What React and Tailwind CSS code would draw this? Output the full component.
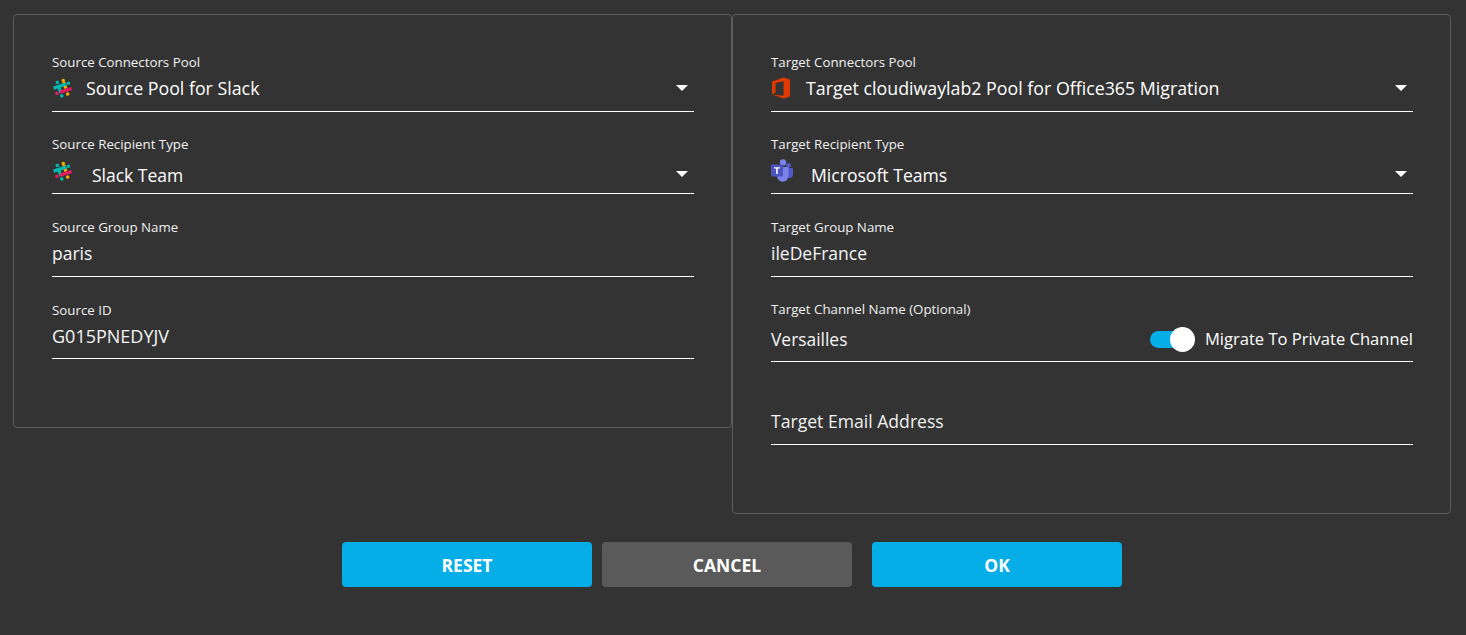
const FONT = "font-['Open_Sans','Noto_Sans',sans-serif]";

function SlackIcon() {
  return (
    <svg width="20" height="20" viewBox="0 0 20 20" className="block ml-px">
      <g transform="rotate(-18 10 10)">
        <rect x="5" y="1" width="3.4" height="3.4" rx="1" fill="#00b8b0" />
        <rect x="11.5" y="1" width="3.4" height="3.4" rx="1" fill="#f5ab00" />
        <rect x="5" y="5.5" width="3.4" height="9" fill="#00b8b0" />
        <rect x="11.5" y="4.5" width="3.4" height="7" fill="#f5ab00" />
        <rect x="1" y="5.5" width="14" height="3.4" fill="#00b8b0" />
        <rect x="15.8" y="5.5" width="3.4" height="3.4" rx="1" fill="#00b8b0" />
        <rect x="1" y="11.8" width="3.4" height="3.4" rx="1" fill="#e8195f" />
        <rect x="6" y="11.8" width="13" height="3.4" fill="#e8195f" />
        <rect x="5" y="16" width="3.4" height="3.4" rx="1" fill="#00b8b0" />
        <rect x="11.5" y="16" width="3.4" height="3.4" rx="1" fill="#f5ab00" />
      </g>
    </svg>
  );
}

function OfficeIcon() {
  return (
    <svg width="20" height="22" viewBox="0 0 20 22" className="block">
      <path
        d="M1 4.6 12.6 0.6 19 2.6V19.4L12.6 21.4 1 17.4 12.6 18.8V4.2L4.6 6V15.6L1 17.4Z"
        fill="#e03a00"
      />
    </svg>
  );
}

function TeamsIcon() {
  return (
    <svg width="22" height="23" viewBox="0 0 22 23" className="block">
      <circle cx="17.5" cy="6.4" r="2.4" fill="#5059c9" />
      <circle cx="12" cy="3.4" r="3.2" fill="#7b83eb" />
      <path d="M15 9h6a1 1 0 0 1 1 1v5.5a3.6 3.6 0 0 1-7 1Z" fill="#5059c9" />
      <path d="M6 8h10.5a1 1 0 0 1 1 1v8a5.7 5.7 0 0 1-11.5 0Z" fill="#7b83eb" />
      <rect x="0" y="5.5" width="12" height="12" rx="1" fill="#4b53bc" />
      <path d="M3 8.2h6v1.4H6.8v5.4H5.2V9.6H3Z" fill="#fff" />
    </svg>
  );
}

function Caret({ className = "" }) {
  return (
    <span className={`block w-0 h-0 border-x-[6px] border-x-transparent border-t-[6px] border-t-white ${className}`} />
  );
}

function Label({ children, className = "" }) {
  return <div className={`text-[13.3px] leading-[20px] text-[#f0f0f0] ${className}`}>{children}</div>;
}

function SelectField({ label, icon, text, textClass, caretClass = "", iconWidth = "w-[20px]", className = "" }) {
  return (
    <div className={`h-[60px] border-b border-white flex flex-col ${className}`}>
      <Label>{label}</Label>
      <div className="flex-1 flex items-center pb-[7px]">
        <span className={`${iconWidth} flex justify-start`}>{icon}</span>
        <span className={`leading-[24px] text-white ${textClass}`}>{text}</span>
        <span className="ml-auto mr-[6px]">
          <Caret className={caretClass} />
        </span>
      </div>
    </div>
  );
}

function TextField({ label, value, labelClass = "", valueClass = "text-[17.5px] mt-[4px]", className = "" }) {
  return (
    <div className={`h-[60px] border-b border-white flex flex-col ${className}`}>
      <Label className={labelClass}>{label}</Label>
      <div className={`leading-[24px] text-[#f5f5f5] ${valueClass}`}>{value}</div>
    </div>
  );
}

function Button({ children, className = "" }) {
  return (
    <button className={`w-[250px] h-[45px] rounded-[4px] text-white font-bold text-[17.5px] pt-px ${className}`}>
      {children}
    </button>
  );
}

export default function App() {
  return (
    <div className={`w-[1466px] h-[635px] overflow-hidden bg-[#333333] pt-[14px] pl-[13px] ${FONT}`}>
      <div className="flex items-start">
        <div className="w-[719px] h-[414px] border border-[#5c5c5c] rounded-[4px] pl-[38px] pr-[37px] pt-[37px]">
          <SelectField
            label="Source Connectors Pool"
            icon={<SlackIcon />}
            text="Source Pool for Slack"
            textClass="text-[17.8px] ml-[14px]"
          />
          <SelectField
            label="Source Recipient Type"
            icon={<SlackIcon />}
            text="Slack Team"
            textClass="text-[17.5px] ml-[20px] mt-[9px]"
            caretClass="mt-[6px]"
            className="mt-[22px]"
          />
          <TextField label="Source Group Name" value="paris" className="mt-[23px]" />
          <TextField
            label="Source ID"
            value="G015PNEDYJV"
            labelClass="mt-px -mb-px"
            valueClass="text-[18px] mt-[5px]"
            className="mt-[22px]"
          />
        </div>
        <div className="w-[719px] h-[500px] border border-[#5c5c5c] rounded-[4px] pl-[38px] pr-[37px] pt-[37px]">
          <SelectField
            label="Target Connectors Pool"
            icon={<OfficeIcon />}
            text="Target cloudiwaylab2 Pool for Office365 Migration"
            textClass="text-[17.8px] ml-[15px]"
          />
          <SelectField
            label="Target Recipient Type"
            icon={<TeamsIcon />}
            text="Microsoft Teams"
            textClass="text-[17.6px] ml-[18px] mt-[9px]"
            caretClass="mt-[6px]"
            iconWidth="w-[22px]"
            className="mt-[22px]"
          />
          <TextField label="Target Group Name" value="ileDeFrance" className="mt-[23px]" />
          <div className="h-[63px] mt-[22px] border-b border-white flex flex-col">
            <Label>Target Channel Name (Optional)</Label>
            <div className="flex items-center mt-[8px]">
              <span className="text-[17.4px] leading-[24px] text-[#f5f5f5]">Versailles</span>
              <span className="ml-auto relative w-[45px] h-[24px] flex items-center">
                <span className="w-[40px] h-[17px] rounded-full bg-[#06aee8]" />
                <span className="absolute right-0 top-0 w-[25px] h-[25px] rounded-full bg-white" />
              </span>
              <span className="ml-[10px] text-[16.55px] leading-[24px] text-white">Migrate To Private Channel</span>
            </div>
          </div>
          <div className="h-[61px] mt-[22px] border-b border-white flex items-end pb-[11px]">
            <span className="text-[17.6px] leading-[24px] text-[#f0f0f0]">Target Email Address</span>
          </div>
        </div>
      </div>
      <div className="flex mt-[28px] pl-[329px]">
        <Button className="bg-[#06aee8]">RESET</Button>
        <Button className="bg-[#5a5a5a] ml-[10px]">CANCEL</Button>
        <Button className="bg-[#06aee8] ml-[20px]">OK</Button>
      </div>
    </div>
  );
}
